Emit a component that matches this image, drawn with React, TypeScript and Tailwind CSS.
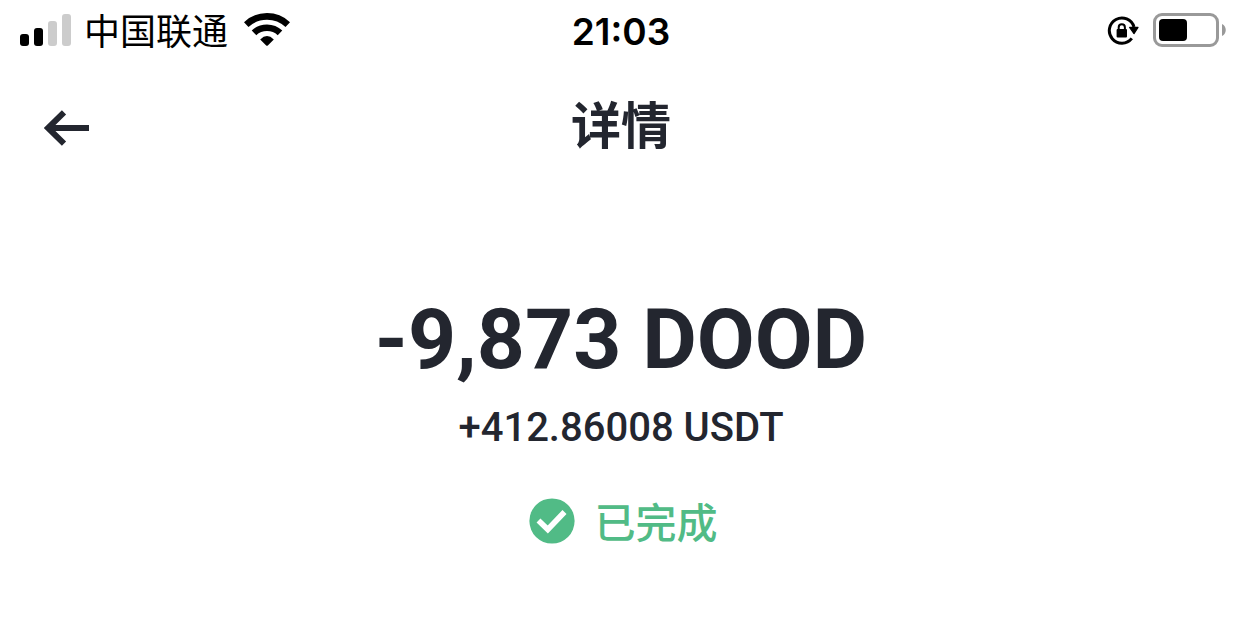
function SignalIcon() {
  return (
    <svg width="52" height="34" viewBox="0 0 52 34" role="img" aria-label="信号">
      <rect x="0" y="21" width="9" height="12" rx="3" fill="#000" />
      <rect x="14" y="15" width="9" height="18" rx="3" fill="#000" />
      <rect x="28" y="8" width="9" height="25" rx="3" fill="#cccccc" />
      <rect x="42" y="1" width="9" height="32" rx="3" fill="#cccccc" />
    </svg>
  );
}

function WifiIcon() {
  return (
    <svg width="46" height="34" viewBox="0 0 46 34" role="img" aria-label="Wi-Fi">
      <g fill="none" stroke="#000">
        <path d="M2.2 11.6C13.8 .6 32.2 .6 43.8 11.6" strokeWidth="6.6" />
        <path d="M10 19.8C17.2 13 28.8 13 36 19.8" strokeWidth="6.6" />
      </g>
      <path d="M16.2 26.4Q23 19.8 29.8 26.4L23.8 32.4Q23 33.2 22.2 32.4Z" fill="#000" />
    </svg>
  );
}

function RotationLockIcon() {
  return (
    <svg width="32" height="32" viewBox="0 0 32 32" role="img" aria-label="方向锁定">
      <path d="M27 13A12.6 12.6 0 1 0 24.8 24.4" fill="none" stroke="#000" strokeWidth="3" />
      <path d="M22.6 13.4H31L27 19.6Z" fill="#000" stroke="#000" strokeWidth="1.2" strokeLinejoin="round" />
      <rect x="9.6" y="15" width="10.4" height="8.6" rx="1" fill="#000" />
      <path d="M11.7 16V13.4a3.1 3.1 0 0 1 6.2 0V16" fill="none" stroke="#000" strokeWidth="2" />
    </svg>
  );
}

function BatteryIcon() {
  return (
    <svg width="73" height="34" viewBox="0 0 73 34" role="img" aria-label="电池">
      <rect x="1.5" y="1.5" width="63" height="31" rx="7.5" fill="none" stroke="#999999" strokeWidth="3" />
      <rect x="6" y="6" width="28" height="22" rx="4" fill="#000" />
      <path d="M69 11C74 13 74 21 69 23Z" fill="#999999" />
    </svg>
  );
}

function StatusBar() {
  return (
    <div className="grid h-15 grid-cols-[1fr_auto_1fr] items-center px-4 text-black">
      <div className="flex items-center pl-1">
        <SignalIcon />
        <span className="ml-3 pb-0.5 font-['Noto_Sans_CJK_SC',sans-serif] text-[36px] leading-[40px] font-normal">
          中国联通
        </span>
        <span className="ml-4">
          <WifiIcon />
        </span>
      </div>
      <time className="pt-1 font-['Inter',sans-serif] text-[37px] leading-[40px] font-semibold">21:03</time>
      <div className="flex items-center justify-end gap-3.5">
        <RotationLockIcon />
        <BatteryIcon />
      </div>
    </div>
  );
}

function Header() {
  return (
    <header className="grid h-34 grid-cols-[1fr_auto_1fr] items-center px-11 text-[#23262f]">
      <button type="button" aria-label="返回" className="w-fit">
        <svg width="46" height="36" viewBox="0 0 46 36" fill="none" stroke="currentColor" strokeWidth="6">
          <path d="M20 2.4L4 18L20 33.6M4 18H45" />
        </svg>
      </button>
      <h1 className="pb-3 font-['Noto_Sans_CJK_SC',sans-serif] text-[50px] leading-[56px] font-bold">
        详情
      </h1>
      <span />
    </header>
  );
}

export default function App() {
  return (
    <div className="min-h-screen bg-white">
      <StatusBar />
      <Header />
      <main className="flex flex-col items-center pt-23 pb-16 text-[#23262f]">
        <p className="font-['Roboto',sans-serif] text-[84px] leading-[104px] font-bold">-9,873 DOOD</p>
        <p className="font-['Roboto',sans-serif] text-[40px] leading-[72px] font-medium">
          +412.86008 USDT
        </p>
        <div className="mt-7 flex items-center gap-5 pl-1 text-[#51bb86]">
          <svg width="46" height="46" viewBox="0 0 46 46" aria-hidden="true">
            <circle cx="23" cy="23" r="22.6" fill="currentColor" />
            <path d="M9.5 22.5L18.8 31.5L35.5 14" fill="none" stroke="#fff" strokeWidth="5.6" />
          </svg>
          <span className="pb-0.5 font-['Noto_Sans_CJK_SC',sans-serif] text-[41px] leading-[56px] font-medium">
            已完成
          </span>
        </div>
      </main>
    </div>
  );
}
